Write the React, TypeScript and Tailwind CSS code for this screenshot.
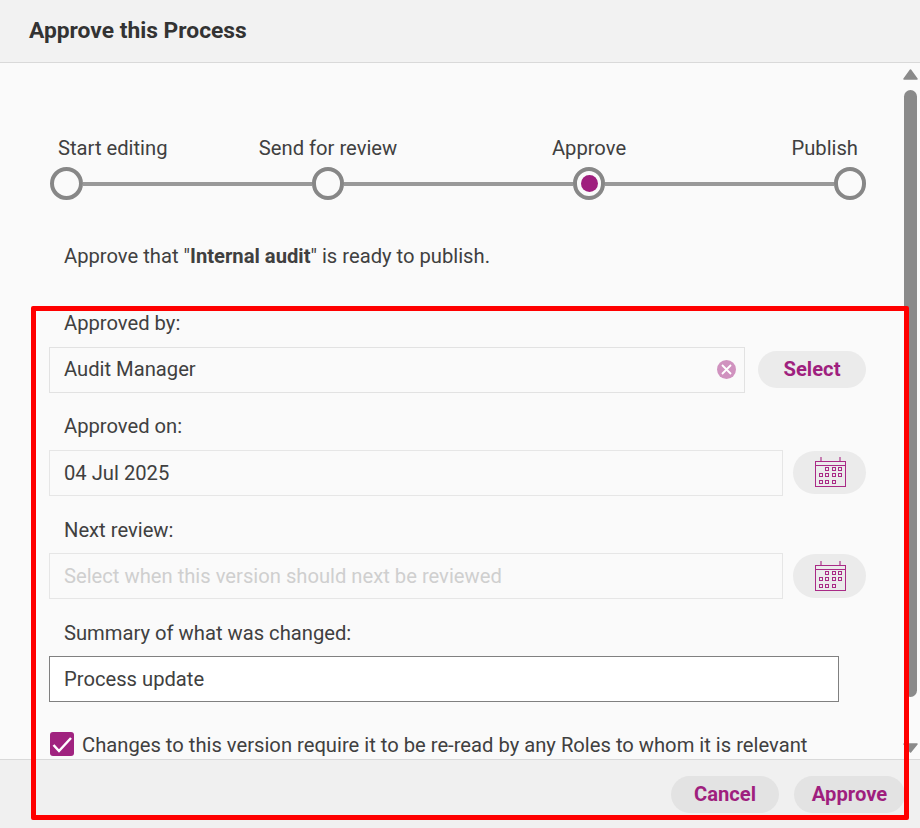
import React from "react";

const font = "font-['Roboto','Liberation_Sans',sans-serif]";

function Calendar() {
  const cells: [number, number][] = [
    [12, 12], [19, 12], [25, 12],
    [6, 18], [12, 18], [19, 18], [25, 18],
    [6, 25], [12, 25], [19, 25],
  ];
  return (
    <svg width="31" height="31" viewBox="0 0 31 31" fill="none" stroke="#a92a86">
      <rect x="0.5" y="4.5" width="30" height="25" />
      <path d="M0.5 8.5H30.5" />
      <path d="M6 0V5M25 0V5" strokeWidth="1.6" opacity="0.7" />
      {cells.map(([x, y]) => (
        <rect key={`${x}-${y}`} x={x - 1.5} y={y - 1.5} width="3" height="3" />
      ))}
    </svg>
  );
}

function Step({ active, first }: { active?: boolean; first?: boolean }) {
  return (
    <div
      className={`flex h-[33px] shrink-0 items-center justify-center rounded-full border-[4px] border-[#878787] bg-[#fafafa] ${
        first ? "w-[33px]" : "w-8"
      }`}
    >
      {active && <div className="h-[17px] w-[17px] rounded-full bg-[#9f1f7e]" />}
    </div>
  );
}

function Line() {
  return <div className="h-1 flex-1 bg-[#999999]" />;
}

function Label({ children, className = "" }: { children: React.ReactNode; className?: string }) {
  return <div className={`ml-[15px] h-6 leading-6 ${className}`}>{children}</div>;
}

function Pill({ children, className = "" }: { children: React.ReactNode; className?: string }) {
  return (
    <button className={`h-[37px] rounded-full text-[20.2px] font-bold text-[#9f1f7e] ${className}`}>{children}</button>
  );
}

export default function App() {
  return (
    <div className={`relative flex h-[828px] w-[920px] flex-col overflow-hidden bg-[#fafafa] text-[20.2px] text-[#404040] ${font}`}>
      <header className="flex h-[63px] shrink-0 items-center border-b border-[#d9d9d9] bg-[#f2f2f2] pl-[29px] text-[22.8px] font-bold text-[#333333]">
        Approve this Process
      </header>

      <div className="flex min-h-0 flex-1">
        <main className="w-[903px] shrink-0 overflow-hidden pl-[49px] pt-[73px]">
          <div className="-ml-[49px] flex h-6 pl-[58px] leading-6">
            <div className="w-[139.5px] whitespace-nowrap">Start editing</div>
            <div className="w-[261px] whitespace-nowrap text-center">Send for review</div>
            <div className="w-[261px] whitespace-nowrap text-center">Approve</div>
            <div className="w-[138.5px] whitespace-nowrap text-right">Publish</div>
          </div>
          <div className="mt-[7px] flex w-[817px] items-center pl-px">
            <Step first />
            <Line />
            <Step />
            <Line />
            <Step active />
            <Line />
            <Step />
          </div>

          <Label className="mt-[44px]">
            Approve that "<b className="font-bold">Internal audit</b>" is ready to publish.
          </Label>

          <Label className="mt-[43px]">Approved by:</Label>
          <div className="mt-3 flex items-start">
            <div className="flex h-[46px] w-[696px] items-center border border-[#e2e2e2] pb-px pl-[14px] pr-[8px]">
              <span className="flex-1">Audit Manager</span>
              <svg width="19" height="19" viewBox="0 0 19 19">
                <circle cx="9.5" cy="9.5" r="9.5" fill="#d092bf" />
                <path d="M5 5L14 14M14 5L5 14" stroke="#ffffff" strokeWidth="1.8" />
              </svg>
            </div>
            <Pill className="ml-[13px] mt-1 w-[108px] bg-[#ebebeb]">Select</Pill>
          </div>

          <Label className="mt-[21px]">Approved on:</Label>
          <div className="mt-3 flex items-start">
            <div className="flex h-[46px] w-[734px] items-center border border-[#e6e6e6] pl-[14px]">04 Jul 2025</div>
            <button className="ml-[10px] mt-px flex h-[43px] w-[73px] items-center justify-center rounded-full bg-[#ebebeb] pl-px">
              <Calendar />
            </button>
          </div>

          <Label className="mt-[22px]">Next review:</Label>
          <div className="mt-[11px] flex items-start">
            <div className="flex h-[46px] w-[734px] items-center border border-[#e6e6e6] pl-[14px] text-[#cfcfcf]">
              Select when this version should next be reviewed
            </div>
            <button className="ml-[10px] mt-px flex h-11 w-[73px] items-center justify-center rounded-full bg-[#ebebeb] pl-px">
              <Calendar />
            </button>
          </div>

          <Label className="mt-[22px]">Summary of what was changed:</Label>
          <div className="mt-[11px] flex h-[46px] w-[790px] items-center border border-[#808080] bg-white pl-[14px]">
            Process update
          </div>

          <div className="mt-[30px] flex h-6 items-center">
            <div className="ml-px h-6 w-6 rounded-[3px] bg-[#a0237f]">
              <svg width="24" height="24" viewBox="0 0 24 24" fill="none">
                <path d="M3.5 13L9 19L21 6" stroke="#ffffff" strokeWidth="2.5" />
              </svg>
            </div>
            <span className="ml-2 whitespace-nowrap pt-px leading-6">Changes to this version require it to be re-read by any Roles to whom it is relevant</span>
          </div>
        </main>

        <aside className="flex flex-1 flex-col items-start pt-[6px]">
          <svg width="15" height="11" viewBox="0 0 15 11">
            <path d="M7.5 1L14 10H1Z" fill="#8a8a8a" stroke="#8a8a8a" strokeWidth="1.5" strokeLinejoin="round" />
          </svg>
          <div className="ml-px mt-[10px] h-[607px] w-[13px] rounded-[7px] bg-[#8a8a8a]" />
          <svg className="mt-[46px]" width="15" height="10" viewBox="0 0 15 10">
            <path d="M1 1H14L7.5 9Z" fill="#8a8a8a" stroke="#8a8a8a" strokeWidth="1.5" strokeLinejoin="round" />
          </svg>
        </aside>
      </div>

      <footer className="flex h-[69px] shrink-0 items-start justify-end gap-[15px] border-t border-[#d9d9d9] bg-[#f0f0f0] pr-[15px] pt-4">
        <Pill className="w-[108px] bg-[#e3e3e3] pb-px">Cancel</Pill>
        <Pill className="w-[111px] bg-[#e3e3e3] pb-px">Approve</Pill>
      </footer>

      <div className="pointer-events-none absolute left-[31px] top-[306px] h-[514px] w-[878px] rounded-[2px] border-[5px] border-[#ff0000]" />
    </div>
  );
}
